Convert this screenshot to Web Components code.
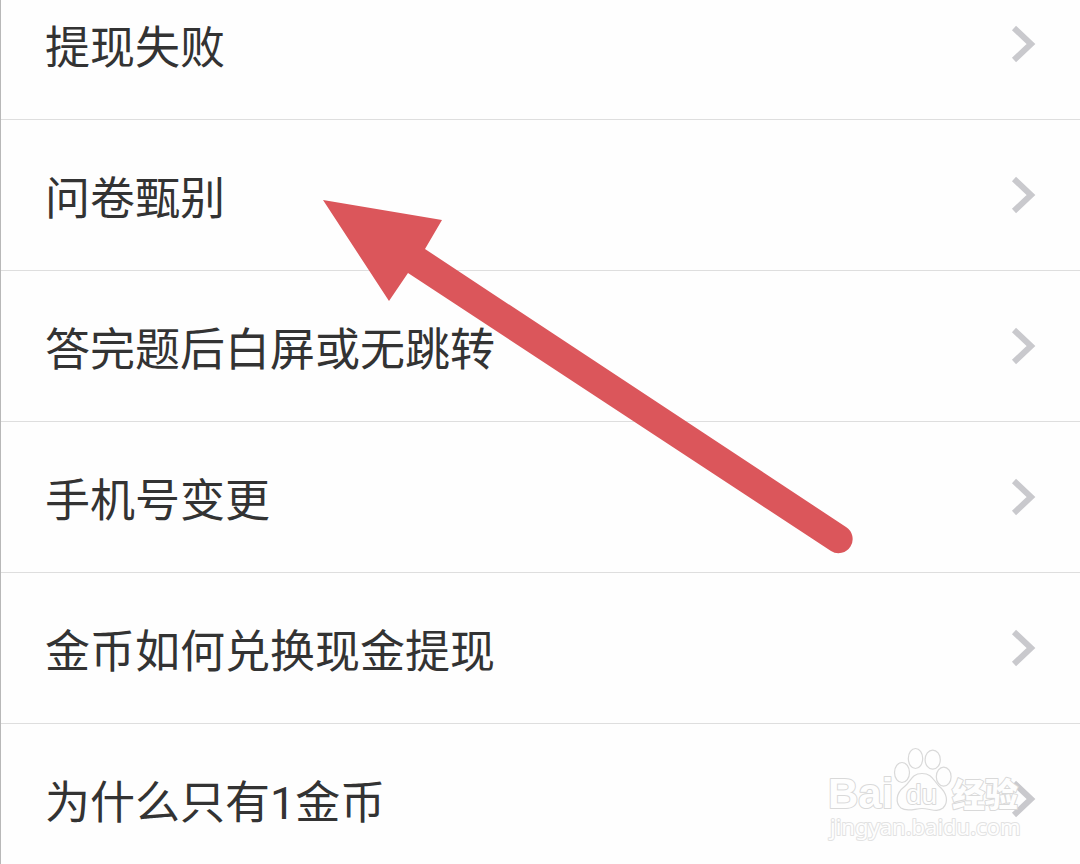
<!DOCTYPE html>
<html lang="zh-CN">
<head>
<meta charset="utf-8">
<meta name="viewport" content="width=device-width, initial-scale=1">
<title>常见问题</title>
<style>
  body { margin: 0; background: #fefefe; color: #333; font-family: Roboto, "Noto Sans CJK SC", sans-serif; }
</style>
</head>
<body>
<help-page>
  <help-row>提现失败</help-row>
  <help-row>问卷甄别</help-row>
  <help-row>答完题后白屏或无跳转</help-row>
  <help-row>手机号变更</help-row>
  <help-row>金币如何兑换现金提现</help-row>
  <help-row>为什么只有1金币</help-row>
  <pointer-arrow slot="overlay"></pointer-arrow>
  <site-mark slot="overlay"></site-mark>
</help-page>
<script>
function define(name, html) {
  const template = document.createElement('template');
  template.innerHTML = html;
  customElements.define(name, class extends HTMLElement {
    constructor() {
      super();
      this.attachShadow({ mode: 'open' }).append(template.content.cloneNode(true));
    }
  });
}

define('help-row', `
  <style>
    :host { display: block; border-bottom: 1px solid #dedede; }
    a { display: flex; align-items: center; justify-content: space-between; gap: 24px;
        padding: var(--row-top, 45px) 44px var(--row-bottom, 45px) 44px; color: inherit; text-decoration: none; }
    span { padding-top: 10px; font-size: 45px; line-height: 50px; }
    svg { flex: none; width: 26px; height: 40px; }
  </style>
  <a href="#"><span><slot></slot></span>
    <svg viewBox="0 0 26 40" aria-hidden="true"><path d="M4 4 21 20 4 36" fill="none" stroke="#c9c9cd" stroke-width="6"/></svg>
  </a>`);

define('help-page', `
  <style>
    :host { display: block; position: relative; box-sizing: border-box; border-left: 1px solid #b8b8b8; overflow: hidden; }
    nav { display: flex; flex-direction: column; }
    ::slotted(help-row:first-child) { --row-top: 14px; }
    ::slotted(help-row:nth-child(6)) { --row-bottom: 35px; border-bottom: 0; }
  </style>
  <nav aria-label="常见问题"><slot></slot></nav>
  <slot name="overlay"></slot>`);

define('pointer-arrow', `
  <style>
    :host { display: block; position: absolute; top: 199px; left: 321px; pointer-events: none; }
    svg { display: block; width: 534px; height: 356px; }
  </style>
  <svg viewBox="322 199 534 356" aria-hidden="true">
    <path d="M323 200 442 220 425 249 846 527A14 14 0 0 1 831 551L408 273 389 301Z" fill="#db565b"/>
  </svg>`);

define('site-mark', `
  <style>
    :host { display: block; position: absolute; right: 50px; bottom: 16px; pointer-events: none; }
    svg { display: block; width: 210px; height: 104px; }
    text { fill: #fefefe; stroke: #d9d9d9; stroke-width: 2px; paint-order: stroke; stroke-linejoin: round; }
    .bai { font: 700 42px "Liberation Sans", sans-serif; }
    .du { font: 400 28px "Liberation Sans", sans-serif; }
    .cn { font: 900 33px "Noto Sans CJK SC", sans-serif; }
    .url { font: 400 22px "Noto Sans", sans-serif; stroke: #e2e2e2; }
  </style>
  <svg viewBox="820 744 210 104">
    <g fill="#fefefe" stroke="#d9d9d9" stroke-width="1.2">
      <ellipse cx="902" cy="772.5" rx="7.5" ry="10"/>
      <ellipse cx="915.5" cy="758.5" rx="7.2" ry="10"/>
      <ellipse cx="932.7" cy="759.7" rx="7.6" ry="9.5"/>
      <ellipse cx="943.7" cy="776.7" rx="7.4" ry="9.5"/>
      <path d="M922 773.5C911 773.5 911 782 904 787C896 793 895 803 901 808C907 812.5 915 808.5 922 808.5C930 808.5 937 813 943 808C949 802 947 793 939 786C933 780 932 773.5 922 773.5Z"/>
    </g>
    <text class="bai" x="828" y="808">Bai</text>
    <text class="du" x="906" y="804">du</text>
    <text class="cn" x="952" y="807">经验</text>
    <text class="url" x="830" y="835">jingyan.baidu.com</text>
  </svg>`);
</script>
</body>
</html>
